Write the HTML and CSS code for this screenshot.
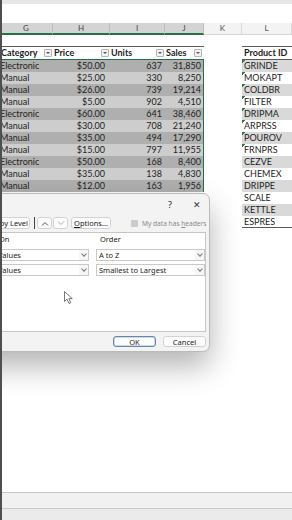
FILE: index.html
```html
<!DOCTYPE html>
<html>
<head>
<meta charset="utf-8">
<meta content="width=device-width, initial-scale=1.0" name="viewport">
<title>Sort</title>
<link rel="stylesheet" href="styles.css">
</head>
<body>
<div class="sheet">
  <div class="band"></div>
  <div class="ribbon"></div>
  <div class="row cols">
    <span class="sel">G</span><span class="sel">H</span><span class="sel">I</span><span class="sel">J</span><span>K</span><span>L</span>
  </div>
  <div class="blank"></div>
  <div class="row thead">
    <span class="s">Category<i class="flt"></i></span>
    <span class="s">Price<i class="flt"></i></span>
    <span class="s">Units<i class="flt"></i></span>
    <span class="s">Sales<i class="flt fj"></i></span>
    <span class="k"></span>
    <span class="pid">Product ID</span>
  </div>
  <div class="row d odd"><span class="s g">Electronic</span><span class="s h">$50.00</span><span class="s n">637</span><span class="s n j">31,850</span><span class="k"></span><span class="l err">GRINDE</span></div>
  <div class="row d even"><span class="s g">Manual</span><span class="s h">$25.00</span><span class="s n">330</span><span class="s n j">8,250</span><span class="k"></span><span class="l err">MOKAPT</span></div>
  <div class="row d odd"><span class="s g">Manual</span><span class="s h">$26.00</span><span class="s n">739</span><span class="s n j">19,214</span><span class="k"></span><span class="l err">COLDBR</span></div>
  <div class="row d even"><span class="s g">Manual</span><span class="s h">$5.00</span><span class="s n">902</span><span class="s n j">4,510</span><span class="k"></span><span class="l err">FILTER</span></div>
  <div class="row d odd"><span class="s g">Electronic</span><span class="s h">$60.00</span><span class="s n">641</span><span class="s n j">38,460</span><span class="k"></span><span class="l err">DRIPMA</span></div>
  <div class="row d even"><span class="s g">Manual</span><span class="s h">$30.00</span><span class="s n">708</span><span class="s n j">21,240</span><span class="k"></span><span class="l err">ARPRSS</span></div>
  <div class="row d odd"><span class="s g">Manual</span><span class="s h">$35.00</span><span class="s n">494</span><span class="s n j">17,290</span><span class="k"></span><span class="l err">POUROV</span></div>
  <div class="row d even"><span class="s g">Manual</span><span class="s h">$15.00</span><span class="s n">797</span><span class="s n j">11,955</span><span class="k"></span><span class="l err">FRNPRS</span></div>
  <div class="row d odd"><span class="s g">Electronic</span><span class="s h">$50.00</span><span class="s n">168</span><span class="s n j">8,400</span><span class="k"></span><span class="l">CEZVE</span></div>
  <div class="row d even"><span class="s g">Manual</span><span class="s h">$35.00</span><span class="s n">138</span><span class="s n j">4,830</span><span class="k"></span><span class="l">CHEMEX</span></div>
  <div class="row d odd"><span class="s g">Manual</span><span class="s h">$12.00</span><span class="s n">163</span><span class="s n j">1,956</span><span class="k"></span><span class="l">DRIPPE</span></div>
  <div class="row d even"><span></span><span></span><span></span><span></span><span class="k"></span><span class="l">SCALE</span></div>
  <div class="row d odd"><span></span><span></span><span></span><span></span><span class="k"></span><span class="l">KETTLE</span></div>
  <div class="row d even last"><span></span><span></span><span></span><span></span><span class="k"></span><span class="l">ESPRES</span></div>
  <div class="fill"></div>
  <div class="tabs"></div>
  <div class="status"></div>
</div>

<div class="dialog">
  <div class="title">
    <span class="help">?</span>
    <span class="close">&#x2715;</span>
  </div>
  <div class="tools">
    <span class="btn">Add Level</span>
    <span class="btn">Delete Level</span>
    <span class="btn copy">Copy Level</span>
    <span class="sep"></span>
    <span class="btn arrow up"><svg width="8" height="5" viewBox="0 0 8 5"><polyline points="1,4.5 4,1.5 7,4.5" fill="none" stroke="#555" stroke-width="1"/></svg></span>
    <span class="btn arrow down"><svg width="8" height="5" viewBox="0 0 8 5"><polyline points="1,0.5 4,3.5 7,0.5" fill="none" stroke="#aaa" stroke-width="1"/></svg></span>
    <span class="btn opts"><span><u>O</u>ptions...</span></span>
    <label class="hdr"><span class="box"></span><span>My data has <u>h</u>eaders</span></label>
  </div>
  <div class="levels">
    <div class="lrow head"><span>Column</span><span class="pad">On</span><span class="pad">Order</span></div>
    <div class="lrow">
      <span class="combo">Sort by Sales<b></b></span>
      <span class="combo">Values<b></b></span>
      <span class="combo">A to Z<b></b></span>
    </div>
    <div class="lrow">
      <span class="combo">Then by Units<b></b></span>
      <span class="combo">Values<b></b></span>
      <span class="combo">Smallest to Largest<b></b></span>
    </div>
  </div>
  <div class="foot">
    <span class="btn ok">OK</span>
    <span class="btn">Cancel</span>
  </div>
</div>

<svg class="cursor" width="11" height="14" viewBox="0 0 11 14"><path d="M0.5 0.5 L0.5 10.5 L3 8.2 L5 12.5 L6.8 11.7 L4.9 7.6 L8.3 7.6 Z" fill="#fff" stroke="#555" stroke-width="0.8" stroke-linejoin="round"/></svg>
</body>
</html>
```

FILE: styles.css
```css
html,body{margin:0;padding:0}
body{width:292px;height:520px;overflow:hidden;position:relative;background:#fff;font-family:Lato,'Liberation Sans',sans-serif;font-size:9px;color:#1e1e1e}
body:before{content:'';position:absolute;left:0;top:0;bottom:0;width:2px;background:#4f4f4f;z-index:3}

/* sheet */
.sheet{display:flex;flex-direction:column;height:520px}
.band{height:4px;background:#e9e6e8}
.ribbon{height:19px}
.row{display:grid;grid-template-columns:53px 57px 55px 39px 38px 50px;height:12px;line-height:12px}
.row span{box-sizing:border-box;white-space:nowrap;overflow:hidden}
.cols span{text-align:center;font-size:8px;color:#555;background:#f3f3f3;border-right:1px solid #dadada;border-bottom:1px solid #d6d6d6;line-height:11px}
.cols .sel{background:#d4d4d4;border-right-color:#bcbcbc;border-bottom:2px solid #217346;color:#444}
.blank{height:11px}
.thead{height:14px}
.thead span{font-weight:bold;display:flex;align-items:center;justify-content:space-between;padding-left:1px}
.thead .s{border-top:1px solid #5a5a5a;border-bottom:1px solid #217346}
.thead .pid{border-top:1px solid #5a5a5a;border-bottom:1px solid #5a5a5a;padding-left:2px}
.flt{width:8px;height:8px;box-sizing:border-box;border:1px solid #b5b5b5;border-radius:1px;background:#f2f2f2;margin-right:1px;display:flex;align-items:center;justify-content:center}
.flt:after{content:'';border-left:2px solid transparent;border-right:2px solid transparent;border-top:2px solid #555}
.fj{margin-right:2px}
.d .g{padding-left:0}
.d .h{text-align:right;padding-right:5px}
.d .n{text-align:right;padding-right:3px}
.d .j{box-shadow:inset -1px 0 #217346}
.odd .s{background:#afafaf}
.even .s{background:#cdcdcd}
.d .l{padding-left:2px}
.odd .l{background-color:#d9d9d9}
.d .err{background-image:linear-gradient(135deg,#2a7b45 50%,transparent 50%);background-size:4px 4px;background-repeat:no-repeat}
.last .l{border-bottom:1px solid #5a5a5a;line-height:11px}
.fill{flex:1}
.tabs{height:15px;border-top:1px solid #c6c6c6;background:#f1f1f1}
.status{height:11px;border-top:1px solid #c9c9c9;background:#ebebeb}

/* sort dialog */
.dialog{position:absolute;left:-190px;top:193px;width:400px;height:159px;box-sizing:border-box;border:1px solid #bababa;border-radius:0 7px 7px 0;background:#f3f3f3;box-shadow:0 14px 30px rgba(0,0,0,.3);font-family:'Noto Sans',sans-serif;font-size:7.5px;color:#1b1b1b;display:flex;flex-direction:column;z-index:2}
.title{height:21px;display:flex;justify-content:flex-end;align-items:center}
.help{width:30px;text-align:center;font-size:9px}
.close{width:24px;text-align:center;font-size:9px;color:#333}
.tools{margin-top:2px;height:12px;display:flex;justify-content:flex-end;padding-right:3px}
.btn{box-sizing:border-box;background:#fcfcfc;border:1px solid #d2d2d2;border-radius:3px;display:flex;align-items:center;justify-content:center;white-space:nowrap;padding:0 4px}
.tools .btn{margin-right:3px}
.tools .copy{margin-right:4px;padding-right:1px}
.sep{width:1px;background:#444;margin-right:2px}
.tools .arrow{width:15px;padding:0}
.tools .up{margin-right:1px}
.opts{width:40px;margin-right:20px!important}
.hdr{width:77px;margin-right:-2px;display:flex;align-items:center;color:#8a8a8a;white-space:nowrap;font-size:6.6px}
.box{width:7px;height:7px;background:#cbcbcb;border-radius:1px;margin-right:4px;flex:none}
.levels{margin:3px 3px 0 0;height:100px;box-sizing:border-box;background:#fff;border:1px solid #c6c6c6}
.lrow{display:grid;grid-template-columns:1fr 94px 109px;column-gap:7px;height:12px}
.lrow+.lrow{margin-top:3px}
.lrow.head{height:13px;line-height:13px}
.head .pad{padding-left:4px}
.pad{padding-left:2px}
.combo{box-sizing:border-box;border:1px solid #c9c9c9;background:#fff;display:flex;align-items:center;justify-content:space-between;padding-left:2px;white-space:nowrap}
.combo b{width:9px;height:10px;display:flex;align-items:center;justify-content:center;background:#f6f6f6}
.combo b:after{content:'';width:3px;height:3px;border-right:1px solid #777;border-bottom:1px solid #777;transform:rotate(45deg);margin-top:-2px}
.foot{margin-top:4px;height:11px;display:flex;justify-content:flex-end;padding-right:3px;gap:7px}
.foot .btn{width:43px}
.foot .ok{border-color:#6787ad;box-shadow:inset 0 0 0 .5px #9db4d2}
.cursor{position:absolute;left:64px;top:291px;z-index:4}
```
